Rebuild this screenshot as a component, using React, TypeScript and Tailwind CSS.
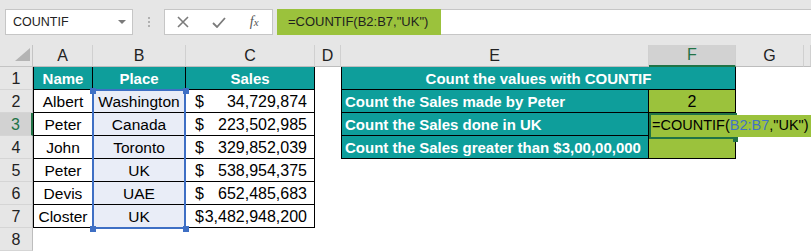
import React from 'react';

const TEAL = 'bg-[#0e9e9b]';
const GREEN = 'bg-[#9bc23c]';
const SEL = 'bg-[#e9edf7]';

const people = [
  ['Albert', 'Washington', '34,729,874'],
  ['Peter', 'Canada', '223,502,985'],
  ['John', 'Toronto', '329,852,039'],
  ['Peter', 'UK', '538,954,375'],
  ['Devis', 'UAE', '652,485,683'],
  ['Closter', 'UK', '3,482,948,200'],
];

const questions = [
  'Count the Sales made by Peter',
  'Count the Sales done in UK',
  'Count the Sales greater than $3,00,00,000',
];

const headers = [
  { l: 'A', w: 'w-[60px]' },
  { l: 'B', w: 'w-[93px]' },
  { l: 'C', w: 'w-[129px]' },
  { l: 'D', w: 'w-[26px]' },
  { l: 'E', w: 'w-[308px]' },
  { l: 'F', w: 'w-[87px]', on: true },
  { l: 'G', w: 'w-[68px]' },
  { l: '', w: 'w-[7px]' },
];

function Cell({ w, className = '', children }: { w: string; className?: string; children?: React.ReactNode }) {
  return <div className={`${w} shrink-0 h-full flex items-center pt-[2px] ${className}`}>{children}</div>;
}

function Row({ n, active, children }: { n: number; active?: boolean; children?: React.ReactNode }) {
  return (
    <div className="flex h-[23px]">
      <div
        className={`w-[33px] shrink-0 flex items-center justify-center pt-[1px] border-b border-[#d5d5d5] text-[16px] ${
          active ? 'bg-[#d2d2d2] text-[#217346] border-r-2 border-r-[#217346]' : 'bg-[#e6e6e6] text-[#222] border-r border-r-[#bdbdbd]'
        }`}
      >
        {n}
      </div>
      {children}
    </div>
  );
}

function FormulaBar() {
  return (
    <div className="h-[45px] bg-[#e6e6e6] pt-[9px] flex items-start">
      <div className="ml-[5px] w-[128px] h-[26px] bg-white border border-[#c6c6c6] flex items-center justify-between pl-[7px] pr-[6px]">
        <span className="text-[12.5px] text-[#222]">COUNTIF</span>
        <svg width="8" height="5" viewBox="0 0 8 5">
          <polygon points="0,0 8,0 4,4" fill="#7a7a7a" />
        </svg>
      </div>
      <div className="w-[31px] h-[26px] flex flex-col items-center justify-center gap-[2px]">
        <span className="w-[2px] h-[2px] bg-[#b0b0b0]" />
        <span className="w-[2px] h-[2px] bg-[#b0b0b0]" />
        <span className="w-[2px] h-[2px] bg-[#b0b0b0]" />
      </div>
      <div className="w-[109px] h-[26px] bg-white border border-[#c6c6c6] flex items-center">
        <div className="w-[36px] flex justify-center">
          <svg width="12" height="12" viewBox="0 0 12 12">
            <path d="M1 1 L11 11 M11 1 L1 11" stroke="#7b7b7b" strokeWidth="1.6" />
          </svg>
        </div>
        <div className="w-[36px] flex justify-center">
          <svg width="14" height="11" viewBox="0 0 14 11">
            <path d="M1 6 L5 10 L13 1" stroke="#7b7b7b" strokeWidth="1.8" fill="none" />
          </svg>
        </div>
        <div className="w-[36px] flex justify-center">
          <span className="font-['Liberation_Serif',serif] italic text-[14px] text-[#555] leading-none">
            f<span className="text-[11px]">x</span>
          </span>
        </div>
      </div>
      <div className="ml-[4px] flex-1 h-[26px] flex">
        <div className={`w-[164px] h-full ${GREEN} flex items-center pl-[11px] text-[13px] text-[#1f1f1f]`}>
          =COUNTIF(B2:B7,"UK")
        </div>
        <div className="flex-1 h-full bg-white border-y border-[#c6c6c6]" />
      </div>
    </div>
  );
}

export default function App() {
  return (
    <div className="w-[811px] h-[251px] overflow-hidden bg-white font-['Liberation_Sans',Arial,sans-serif] text-black select-none">
      <FormulaBar />
      <div className="relative">
        {/* column headers */}
        <div className="flex h-[22px]">
          <div className="w-[33px] shrink-0 relative bg-[#e6e6e6] border-r border-b border-[#c4c4c4]">
            <svg className="absolute left-[15px] top-[3px]" width="15" height="13" viewBox="0 0 15 13">
              <polygon points="15,0 15,13 0,13" fill="#b4b4b4" />
            </svg>
          </div>
          {headers.map((h, i) => (
            <div
              key={i}
              className={`${h.w} shrink-0 flex items-center justify-center text-[16px] border-r border-[#d0d0d0] ${
                h.on
                  ? 'bg-[#d2d2d2] text-[#217346] border-b-2 border-b-[#217346]'
                  : 'bg-[#e6e6e6] text-[#222] border-b border-b-[#bdbdbd]'
              }`}
            >
              {h.l}
            </div>
          ))}
        </div>

        {/* row 1 */}
        <Row n={1}>
          <Cell w="w-[60px]" className={`${TEAL} border-l border-r border-b border-black justify-center font-bold text-white text-[15px]`}>
            Name
          </Cell>
          <Cell w="w-[93px]" className={`${TEAL} border-r border-b border-black justify-center font-bold text-white text-[15px]`}>
            Place
          </Cell>
          <Cell w="w-[129px]" className={`${TEAL} border-r border-b border-black justify-center font-bold text-white text-[15px]`}>
            Sales
          </Cell>
          <Cell w="w-[26px]" />
          <Cell w="w-[395px]" className={`${TEAL} border-l border-r border-b border-black justify-center font-bold text-white text-[15px]`}>
            Count the values with COUNTIF
          </Cell>
        </Row>

        {people.map((p, i) => (
          <Row key={i} n={i + 2} active={i === 1}>
            <Cell w="w-[60px]" className="border-l border-r border-b border-black justify-center text-[15.5px]">
              {p[0]}
            </Cell>
            <Cell w="w-[93px]" className={`${SEL} border-r border-b border-black justify-center text-[15.5px]`}>
              {p[1]}
            </Cell>
            <Cell w="w-[129px]" className="border-r border-b border-black justify-between pl-[9px] pr-[7px] text-[16px]">
              <span>$</span>
              <span>{p[2]}</span>
            </Cell>
            {i < 3 && (
              <>
                <Cell w="w-[26px]" />
                <Cell w="w-[308px]" className={`${TEAL} border-l border-r border-b border-black pl-[3px] font-bold text-white text-[15px]`}>
                  {questions[i]}
                </Cell>
                <Cell w="w-[87px]" className={`${GREEN} border-r border-b border-black justify-center text-[16px]`}>
                  {i === 0 ? '2' : ''}
                </Cell>
              </>
            )}
          </Row>
        ))}

        <Row n={8} />

        {/* in-cell editor for F3 */}
        <div className={`absolute left-[651px] top-[70px] w-[160px] h-[22px] ${GREEN} flex items-center pl-[1px] text-[14.5px] whitespace-nowrap`}>
          =COUNTIF(<span className="text-[#4472c4]">B2:B7</span>,"UK")
        </div>
        {/* active cell border */}
        <div className="absolute left-[649px] top-[68px] w-[88px] h-[26px] border-l-2 border-t-2 border-b-2 border-[#217346]" />
        <div className="absolute left-[733px] top-[92px] w-[5px] h-[5px] bg-[#217346]" />

        {/* reference highlight B2:B7 */}
        <div className="absolute left-[92px] top-[44px] w-[94px] h-[140px] border-2 border-[#3e6fc4]" />
        <div className="absolute left-[90px] top-[43px] w-[6px] h-[6px] bg-[#3e6fc4]" />
        <div className="absolute left-[183px] top-[43px] w-[6px] h-[6px] bg-[#3e6fc4]" />
        <div className="absolute left-[90px] top-[181px] w-[6px] h-[6px] bg-[#3e6fc4]" />
        <div className="absolute left-[183px] top-[181px] w-[6px] h-[6px] bg-[#3e6fc4]" />
      </div>
    </div>
  );
}
